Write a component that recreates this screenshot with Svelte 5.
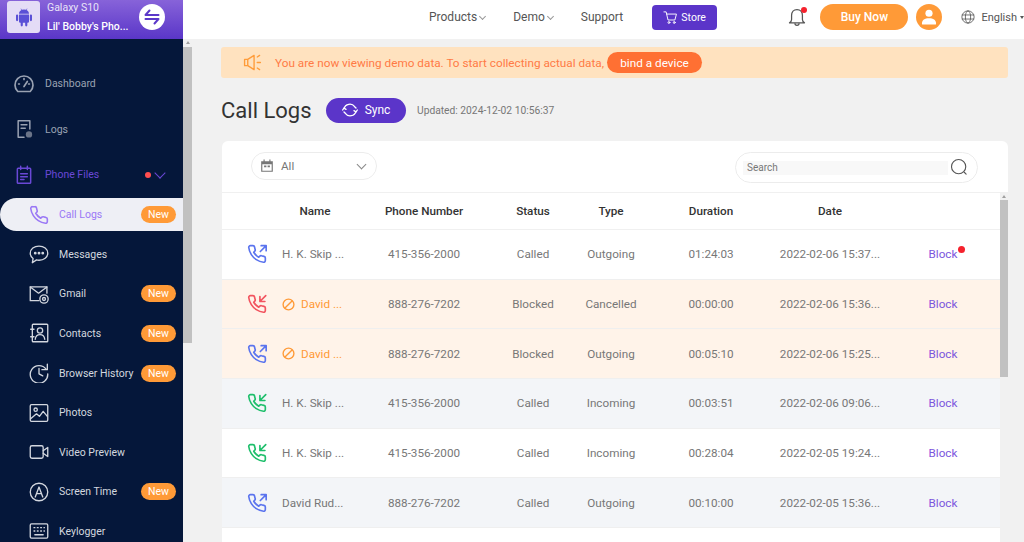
<script>
  const nav = [
    { label: 'Call Logs', icon: 'phone', isNew: true, active: true },
    { label: 'Messages', icon: 'chat' },
    { label: 'Gmail', icon: 'mail', isNew: true },
    { label: 'Contacts', icon: 'contacts', isNew: true },
    { label: 'Browser History', icon: 'history', isNew: true },
    { label: 'Photos', icon: 'photo' },
    { label: 'Video Preview', icon: 'video' },
    { label: 'Screen Time', icon: 'apps', isNew: true },
    { label: 'Keylogger', icon: 'keyboard' }
  ];

  const rows = [
    { dir: 'out', color: '#5b74ee', name: 'H. K. Skip ...', phone: '415-356-2000', status: 'Called', type: 'Outgoing', time: '01:24:03', date: '2022-02-06 15:37...', dot: true },
    { dir: 'in', color: '#f2545f', name: 'David ...', phone: '888-276-7202', status: 'Blocked', type: 'Cancelled', time: '00:00:00', date: '2022-02-06 15:36...', blocked: true },
    { dir: 'out', color: '#5b74ee', name: 'David ...', phone: '888-276-7202', status: 'Blocked', type: 'Outgoing', time: '00:05:10', date: '2022-02-06 15:25...', blocked: true },
    { dir: 'in', color: '#1fbf6c', name: 'H. K. Skip ...', phone: '415-356-2000', status: 'Called', type: 'Incoming', time: '00:03:51', date: '2022-02-06 09:06...', alt: true },
    { dir: 'in', color: '#1fbf6c', name: 'H. K. Skip ...', phone: '415-356-2000', status: 'Called', type: 'Incoming', time: '00:28:04', date: '2022-02-05 19:24...' },
    { dir: 'out', color: '#5b74ee', name: 'David Rud...', phone: '888-276-7202', status: 'Called', type: 'Outgoing', time: '00:10:00', date: '2022-02-05 15:36...', alt: true },
    { dir: '', color: '', name: '', phone: '', status: '', type: '', time: '', date: '' }
  ];

  const phonePath = 'M22 16.9v3a2 2 0 0 1-2.2 2 19.8 19.8 0 0 1-8.6-3.1 19.5 19.5 0 0 1-6-6A19.8 19.8 0 0 1 2.1 4.2 2 2 0 0 1 4.1 2h3a2 2 0 0 1 2 1.7c.1 1 .4 1.9.7 2.8a2 2 0 0 1-.5 2.1L8.1 9.9a16 16 0 0 0 6 6l1.3-1.3a2 2 0 0 1 2.1-.4c.9.3 1.8.6 2.8.7a2 2 0 0 1 1.7 2z';
</script>

{#snippet navIcon(name)}
  <svg class="nav-icon" viewBox="0 0 24 24" fill="none" stroke="currentColor" stroke-width="1.6" stroke-linecap="round" stroke-linejoin="round">
    {#if name === 'phone'}
      <path d={phonePath} stroke-width="1.9" />
    {:else if name === 'chat'}
      <path d="M12 2.500c5.800 0 10.500 3.600 10.500 8.500s-4.700 8.500-10.500 8.500c-1 0-2-.1-3-.4L4 22.500l.9-5C2.800 15.900 1.500 13.600 1.500 11c0-4.900 4.700-8.500 10.500-8.500z" />
      <circle cx="7.500" cy="11" r=".9" fill="currentColor" />
      <circle cx="12" cy="11" r=".9" fill="currentColor" />
      <circle cx="16.500" cy="11" r=".9" fill="currentColor" />
    {:else if name === 'mail'}
      <path d="M12 20H1.500V3.500h20V11" />
      <path d="M1.500 3.500L11.500 11l10-7.500" />
      <circle cx="18" cy="18" r="5" />
      <circle cx="18" cy="18" r="1.800" />
    {:else if name === 'contacts'}
      <rect x="4" y="1.500" width="18.500" height="21" rx="1" />
      <circle cx="13.200" cy="9" r="3.200" />
      <path d="M7.500 19.500c.5-4 2.500-5.500 5.700-5.500s5.200 1.500 5.700 5.500M2 7.500h4M2 16.500h4" />
    {:else if name === 'history'}
      <path d="M20.500 7.500A10.500 10.500 0 1 0 22.500 13" />
      <path d="M22 1.500V8h-6.500M12 6.500V13l4.500 2.500" />
    {:else if name === 'photo'}
      <rect x="1.500" y="2" width="21" height="20" rx="1.500" />
      <circle cx="8" cy="8" r="2" />
      <path d="M2 19l7-6 3.500 3L17 10l5 6" />
    {:else if name === 'video'}
      <rect x="1.500" y="4.500" width="15.500" height="15" rx="2" />
      <path d="M17 10.500L22.500 6.500v11L17 13.500" />
    {:else if name === 'apps'}
      <circle cx="12" cy="12" r="10.500" />
      <path d="M7.500 18L12 6l4.500 12M9 14h6" />
    {:else if name === 'keyboard'}
      <rect x="1.500" y="3.500" width="21" height="17" rx="1.500" />
      <path d="M6 8h1M10 8h1M14 8h1M18 8h.5M6 12h1M10 12h1M14 12h1M18 12h.5M7 16.500h10" />
    {/if}
  </svg>
{/snippet}

<div class="app">
  <div class="brand">
    <div class="tile">
      <svg viewBox="0 0 24 24" width="20" height="20" fill="#5a50d6">
        <path d="M6 9h12v8.500a1.500 1.500 0 0 1-1.500 1.500H16v3a1.300 1.300 0 0 1-2.600 0v-3h-2.800v3a1.300 1.300 0 0 1-2.600 0v-3H7.500A1.500 1.500 0 0 1 6 17.500z" />
        <path d="M3.700 9a1.300 1.300 0 0 1 1.300 1.300v5.400a1.300 1.300 0 0 1-2.600 0v-5.400A1.300 1.300 0 0 1 3.700 9zM20.300 9a1.300 1.300 0 0 1 1.300 1.300v5.400a1.300 1.300 0 0 1-2.600 0v-5.400A1.300 1.300 0 0 1 20.300 9z" />
        <path d="M6 8c.1-2 1.200-3.500 2.800-4.400L7.900 2l.5-.3 1 1.700a7 7 0 0 1 5.200 0l1-1.700.5.300-.9 1.600C16.800 4.500 17.900 6 18 8z" />
      </svg>
    </div>
    <div class="device">
      <div class="model">Galaxy S10</div>
      <div class="owner">Lil' Bobby's Pho...</div>
    </div>
    <svg class="swap" viewBox="0 0 26 26" width="26" height="26">
      <circle cx="13" cy="13" r="13" fill="#fff" />
      <path d="M6.500 11h13M10.500 6.500L6.500 11M6.500 15h13M15.500 19.500l4-4.500" stroke="#5b38c9" stroke-width="2" stroke-linecap="round" fill="none" />
    </svg>
  </div>

  <header class="topbar">
    <nav class="menu">
      <span>Products<i class="caret"></i></span>
      <span>Demo<i class="caret"></i></span>
      <span>Support</span>
      <button class="store">
        <svg viewBox="0 0 24 24" width="15" height="15" fill="none" stroke="#fff" stroke-width="1.500" stroke-linecap="round" stroke-linejoin="round">
          <path d="M1.500 3h3.500l3 13h11l2.500-9.500H6" />
          <circle cx="9.500" cy="20" r="1.500" />
          <circle cx="18" cy="20" r="1.500" />
        </svg>
        Store
      </button>
    </nav>
    <div class="actions">
      <div class="bell">
        <svg viewBox="0 0 24 24" width="20" height="22" fill="none" stroke="#555" stroke-width="1.500" stroke-linejoin="round">
          <path d="M12 3c-4 0-6.500 3-6.500 7v5c0 1.500-1 3-2.500 4h18c-1.500-1-2.500-2.500-2.500-4v-5c0-4-2.500-7-6.500-7z" />
          <path d="M9.500 19.500c0 1.500 1 2.500 2.500 2.500s2.500-1 2.500-2.500" />
        </svg>
        <b></b>
      </div>
      <button class="buy">Buy Now</button>
      <div class="avatar">
        <svg viewBox="0 0 24 24" width="20" height="20" fill="#fff">
          <circle cx="12" cy="7.500" r="4.300" />
          <path d="M3.500 20c0-4.500 3.500-6.500 8.500-6.500s8.500 2 8.500 6.500a1 1 0 0 1-1 1h-15a1 1 0 0 1-1-1z" />
        </svg>
      </div>
      <div class="lang">
        <svg viewBox="0 0 24 24" width="14" height="14" fill="none" stroke="#555" stroke-width="1.400">
          <circle cx="12" cy="12" r="10.500" />
          <ellipse cx="12" cy="12" rx="4.500" ry="10.500" />
          <path d="M1.500 8.500h21M1.500 15.500h21" />
        </svg>
        <span>English</span>
        <i class="down"></i>
      </div>
    </div>
  </header>

  <aside class="side">
    <a class="top-item">
      <svg class="top-icon" viewBox="0 0 24 24" fill="none" stroke="#9aa2b2" stroke-width="2" stroke-linecap="round" stroke-linejoin="round">
        <path d="M4.500 21A10.800 10.800 0 1 1 19.500 21z" />
        <path d="M12 15l4-6M5.500 12h1M12 5.500v1M18.500 12h-1" />
      </svg>
      Dashboard
    </a>
    <a class="top-item">
      <svg class="top-icon" viewBox="0 0 24 24" fill="none" stroke="#9aa2b2" stroke-width="1.800" stroke-linecap="round" stroke-linejoin="round">
        <path d="M12 22H5V2h14v10" />
        <path d="M8.500 7h7M8.500 11h5" />
        <circle cx="18" cy="18.500" r="3.800" fill="#6b7488" stroke="none" />
      </svg>
      Logs
    </a>
    <a class="top-item current">
      <svg class="top-icon" viewBox="0 0 24 24" fill="none" stroke="#6a48d6" stroke-width="1.800" stroke-linecap="round">
        <rect x="4" y="4" width="16" height="18" rx="1" />
        <path d="M8 1.500v4M16 1.500v4M8 10.500h8M8 14h8M8 17.500h4" />
      </svg>
      Phone Files
      <b class="red"></b>
      <i class="chev"></i>
    </a>
    {#each nav as item}
      <a class="sub-item" class:active={item.active}>
        {@render navIcon(item.icon)}
        <span class="sub-label">{item.label}</span>
        {#if item.isNew}<em class="new">New</em>{/if}
      </a>
    {/each}
  </aside>

  <div class="bar side-bar"><i class="arrow"></i><i class="thumb"></i></div>

  <main class="main">
    <div class="banner">
      <svg viewBox="0 0 24 24" width="19" height="19" fill="none" stroke="#ff9c3a" stroke-width="1.700" stroke-linecap="round" stroke-linejoin="round">
        <path d="M2 8h4l8-5v18l-8-5H2zM6 8v8" />
        <path d="M18 5l3-2M18 12h4M18 19l3 2" />
      </svg>
      <span class="notice">You are now viewing demo data. To start collecting actual data,</span>
      <button class="bind">bind a device</button>
    </div>

    <div class="title-row">
      <h1>Call Logs</h1>
      <button class="sync">
        <svg viewBox="0 0 24 24" width="16" height="16" fill="none" stroke="#fff" stroke-width="2" stroke-linecap="round" stroke-linejoin="round">
          <path d="M3 10a9 9 0 0 1 16-3l2 2M21 14a9 9 0 0 1-16 3l-2-2" />
          <path d="M1 12l2-3 3 2M23 12l-2 3-3-2" />
        </svg>
        Sync
      </button>
      <span class="updated">Updated: 2024-12-02 10:56:37</span>
    </div>

    <section class="card">
      <div class="filters">
        <div class="select">
          <svg viewBox="0 0 24 24" width="14" height="14" fill="#777">
            <path d="M6 1h2v3h8V1h2v3h4v18H2V4h4zM4 9v11h16V9zM7 11h4v3H7zM13 11h4v3h-4z" />
          </svg>
          <span>All</span>
          <i class="select-chev"></i>
        </div>
        <div class="search">
          <span class="search-input">Search</span>
          <svg viewBox="0 0 24 24" width="18" height="18" fill="none" stroke="#555" stroke-width="1.500" stroke-linecap="round">
            <circle cx="11.500" cy="11.500" r="9.500" />
            <path d="M19 19l2.500 2.500" />
          </svg>
        </div>
      </div>

      <div class="table">
        <div class="thead grid">
          <span></span><span>Name</span><span>Phone Number</span><span>Status</span><span>Type</span><span>Duration</span><span>Date</span><span></span>
        </div>
        {#each rows as row}
          <div class="row grid" class:blocked={row.blocked} class:alt={row.alt}>
            <span class="call">
              {#if row.dir}
                <svg viewBox="0 0 24 24" width="20" height="20" fill="none" stroke={row.color} stroke-width="2" stroke-linecap="round" stroke-linejoin="round">
                  <path d={phonePath} />
                  {#if row.dir === 'out'}
                    <path d="M17 2h6v6M23 2l-7 7" />
                  {:else}
                    <path d="M15.500 3v6h6M22.500 2l-7 7" />
                  {/if}
                </svg>
              {/if}
            </span>
            <span class="name">
              {#if row.blocked}
                <svg viewBox="0 0 24 24" width="13" height="13" fill="none" stroke="#ff9a37" stroke-width="2.500">
                  <circle cx="12" cy="12" r="10" />
                  <path d="M19 5L5 19" />
                </svg>
              {/if}
              {row.name}
            </span>
            <span>{row.phone}</span>
            <span>{row.status}</span>
            <span>{row.type}</span>
            <span>{row.time}</span>
            <span>{row.date}</span>
            <span class="block">
              {#if row.dir}Block{/if}
              {#if row.dot}<b></b>{/if}
            </span>
          </div>
        {/each}
        <div class="bar table-bar"><i class="arrow"></i><i class="thumb"></i></div>
      </div>
    </section>
  </main>
</div>

<style>
  :global(body) {
    margin: 0;
    font-family: Roboto, "Liberation Sans", sans-serif;
  }

  .app {
    width: 1024px;
    height: 542px;
    overflow: hidden;
    display: grid;
    grid-template-columns: 183px 9px 1fr;
    grid-template-rows: 39px 1fr;
    background: #f1f1f1;
  }

  .brand {
    background: linear-gradient(180deg, #8763d9, #5a36c8);
    display: flex;
    align-items: center;
    padding: 0 18px 0 7px;
    gap: 7px;
    color: #fff;
  }
  .tile {
    width: 33px;
    height: 32px;
    margin-top: -6px;
    border-radius: 3px;
    background: #e4dcf6;
    display: flex;
    align-items: center;
    justify-content: center;
    flex: none;
  }
  .device { flex: 1; min-width: 0; margin-top: -5px; }
  .model { font-size: 10.5px; line-height: 15px; color: #e9e3f8; }
  .owner { font-size: 10.5px; line-height: 16px; margin-top: 4px; font-weight: 500; white-space: nowrap; }
  .swap { flex: none; margin-top: -5px; }

  .topbar {
    grid-column: 2 / 4;
    background: #fff;
    display: flex;
    align-items: center;
    padding-left: 246px;
    color: #555;
  }
  .menu {
    display: flex;
    align-items: center;
    font-size: 12px;
    margin-top: -5px;
  }
  .menu span { margin-right: 28px; }
  .menu span:nth-child(3) { margin-right: 29px; }
  .caret {
    display: inline-block;
    width: 4px;
    height: 4px;
    margin: 0 0 2px 3px;
    border-right: 1px solid #999;
    border-bottom: 1px solid #999;
    transform: rotate(45deg);
  }
  .store {
    width: 65px;
    height: 25px;
    border: 0;
    border-radius: 4px;
    background: #5b35c9;
    color: #fff;
    font: 10.5px Roboto, sans-serif;
    display: flex;
    align-items: center;
    justify-content: center;
    gap: 3px;
  }
  .actions {
    display: flex;
    align-items: center;
    margin-left: auto;
    margin-top: -5px;
  }
  .bell { position: relative; height: 22px; margin-right: 13px; }
  .bell b {
    position: absolute;
    top: 1px;
    right: 0;
    width: 6px;
    height: 6px;
    border-radius: 50%;
    background: #f5222d;
  }
  .buy {
    width: 88px;
    height: 26px;
    border: 0;
    border-radius: 13px;
    background: #ff9a37;
    color: #fff;
    font: 500 12px Roboto, sans-serif;
  }
  .avatar {
    width: 26px;
    height: 26px;
    margin-left: 8px;
    border-radius: 50%;
    background: #ff9a37;
    display: flex;
    align-items: center;
    justify-content: center;
  }
  .lang {
    display: flex;
    align-items: center;
    margin-left: 19px;
    font-size: 11px;
  }
  .lang span { margin-left: 6px; }
  .down {
    margin-left: 3px;
    border: 2.500px solid transparent;
    border-top: 3px solid #555;
    border-bottom: 0;
  }

  .side {
    background: #05173a;
    padding-top: 22px;
    overflow: hidden;
    font-size: 10.5px;
  }
  .top-item {
    display: flex;
    align-items: center;
    height: 45.500px;
    padding-left: 14px;
    color: #9aa2b2;
  }
  .top-item.current { color: #6a48d6; }
  .top-icon { width: 20px; height: 20px; margin-right: 11px; flex: none; }
  .red {
    width: 6px;
    height: 6px;
    border-radius: 50%;
    background: #ff4d4f;
    margin-left: 46px;
  }
  .chev {
    width: 7px;
    height: 7px;
    margin: -3px 0 0 5px;
    border-right: 1.200px solid #6a48d6;
    border-bottom: 1.200px solid #6a48d6;
    transform: rotate(45deg);
  }
  .sub-item {
    display: flex;
    align-items: center;
    height: 39.600px;
    padding: 0 7px 0 29px;
    color: #d3d7df;
    box-sizing: border-box;
  }
  .sub-item.active {
    height: 33px;
    margin: 0.500px 0 3.500px;
    background: #eeeff5;
    color: #9a78f5;
    border-radius: 17px 0 0 17px;
  }
  .nav-icon { width: 20px; height: 20px; margin-right: 10px; flex: none; }
  .sub-label { flex: 1; white-space: nowrap; }
  .new {
    width: 35px;
    height: 17px;
    border-radius: 9px;
    background: #ff9a37;
    color: #fff;
    font-style: normal;
    font-size: 10.5px;
    line-height: 17px;
    text-align: center;
    flex: none;
  }

  .bar {
    background: #f1f1f1;
    display: flex;
    flex-direction: column;
    align-items: center;
  }
  .arrow {
    margin-top: 2px;
    border: 2.500px solid transparent;
    border-bottom: 3px solid #a0a0a0;
    border-top: 0;
  }
  .thumb { display: block; background: #c1c1c1; width: 100%; }
  .side-bar .thumb { height: 296px; margin-top: 3px; }

  .main {
    padding: 8px 16px 0 20px;
    min-width: 0;
  }
  .banner {
    height: 31px;
    margin-left: 9px;
    border-radius: 3px;
    background: #ffe2bf;
    display: flex;
    align-items: center;
    padding-left: 22px;
    font-size: 11.75px;
    color: #ff7a45;
  }
  .notice { margin-left: 13px; }
  .bind {
    margin-left: 3px;
    width: 95px;
    height: 21px;
    border: 0;
    border-radius: 11px;
    background: #ff7033;
    color: #fff;
    font: 11.75px Roboto, sans-serif;
  }

  .title-row {
    display: flex;
    align-items: center;
    height: 63px;
    margin-left: 9px;
    padding-top: 1px;
    box-sizing: border-box;
  }
  h1 {
    margin: 0 15px 0 0;
    font-size: 22px;
    font-weight: 400;
    color: #333;
    width: 90px;
    white-space: nowrap;
  }
  .sync {
    width: 80px;
    height: 25px;
    border: 0;
    border-radius: 13px;
    background: #5b35c9;
    color: #fff;
    font: 12px Roboto, sans-serif;
    display: flex;
    align-items: center;
    justify-content: center;
    gap: 7px;
  }
  .updated { margin-left: 11px; font-size: 10.25px; color: #777; }

  .card {
    margin-left: 10px;
    background: #fff;
    border-radius: 6px 6px 0 0;
    height: 401px;
    display: flex;
    flex-direction: column;
    overflow: hidden;
  }
  .filters {
    height: 52px;
    flex: none;
    display: flex;
    align-items: center;
    justify-content: space-between;
    padding: 0 30px 0 29px;
    box-sizing: border-box;
    border-bottom: 1px solid #f0f0f0;
  }
  .select {
    width: 126px;
    height: 28px;
    margin-top: -1px;
    border: 1px solid #ececec;
    border-radius: 14px;
    box-sizing: border-box;
    display: flex;
    align-items: center;
    padding: 0 8px;
    font-size: 11.7px;
    color: #777;
    gap: 7px;
  }
  .select-chev {
    width: 6px;
    height: 6px;
    margin: -3px 3px 0 auto;
    border-right: 1.300px solid #888;
    border-bottom: 1.300px solid #888;
    transform: rotate(45deg);
  }
  .search {
    width: 243px;
    height: 31px;
    border: 1px solid #ececec;
    border-radius: 16px;
    box-sizing: border-box;
    display: flex;
    align-items: center;
    padding: 0 9px 0 7px;
    margin-top: 1px;
  }
  .search-input {
    flex: 1;
    height: 14px;
    margin: 2px 2px 0 0;
    background: #f8f8f8;
    font-size: 10px;
    line-height: 14px;
    color: #777;
    padding-left: 4px;
  }

  .table { position: relative; flex: 1; overflow: hidden; }
  .grid {
    display: grid;
    grid-template-columns: 48px 90px 128px 90px 66px 134px 104px 118px;
    align-items: center;
    text-align: center;
  }
  .thead {
    height: 37px;
    font-size: 11.7px;
    font-weight: 500;
    color: #333;
    border-bottom: 1px solid #f0f0f0;
    box-sizing: border-box;
  }
  .row {
    height: 49.700px;
    font-size: 11.7px;
    color: #777;
    border-bottom: 1px solid #efefef;
    box-sizing: border-box;
    white-space: nowrap;
  }
  .row.blocked { background: #fff3e9; }
  .row.alt { background: #f3f5f8; }
  .call { display: flex; justify-content: flex-end; padding-right: 3px; }
  .name {
    display: flex;
    align-items: center;
    gap: 6px;
    text-align: left;
    padding-left: 12px;
  }
  .row.blocked .name { color: #ff9a37; }
  .block { color: #7b55dd; position: relative; padding-left: 4px; }
  .block b {
    position: absolute;
    left: 76px;
    top: -1px;
    width: 7px;
    height: 7px;
    border-radius: 50%;
    background: #f5222d;
  }
  .table-bar {
    position: absolute;
    top: 0;
    right: 0;
    bottom: 0;
    width: 8px;
  }
  .table-bar .thumb { height: 177px; margin-top: 2px; }
</style>
